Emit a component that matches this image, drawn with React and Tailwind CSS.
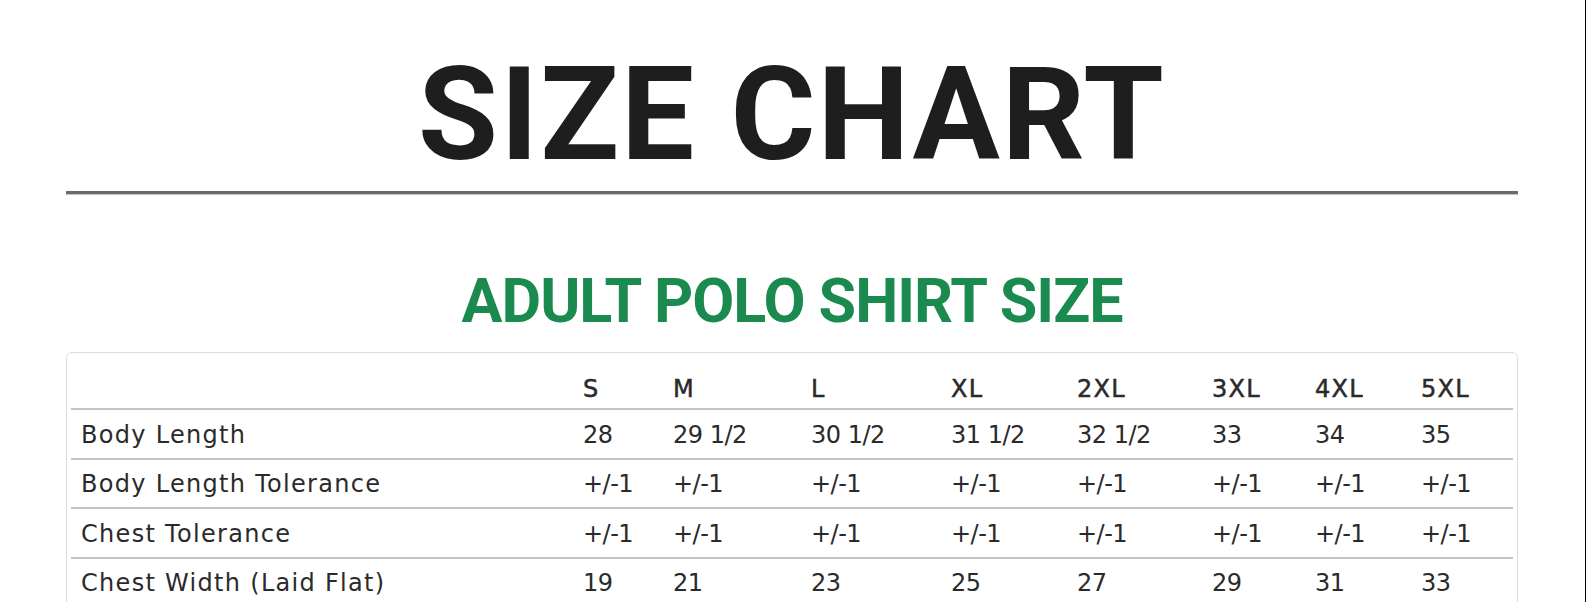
const sizes = ["S", "M", "L", "XL", "2XL", "3XL", "4XL", "5XL"];

const rows = [
  { label: "Body Length", values: ["28", "29 1/2", "30 1/2", "31 1/2", "32 1/2", "33", "34", "35"] },
  { label: "Body Length Tolerance", values: Array(8).fill("+/-1") },
  { label: "Chest Tolerance", values: Array(8).fill("+/-1") },
  { label: "Chest Width (Laid Flat)", values: ["19", "21", "23", "25", "27", "29", "31", "33"] },
];

const cols = "grid grid-cols-[512px_90px_138px_140px_126px_135px_103px_106px_1fr]";

const App = () => {
  return (
    <div className="h-[602px] w-full overflow-hidden border-r border-black bg-white">
      <div className="pl-[66px] pr-[67px] pt-[50px]">
        <h1 className="text-center font-['Roboto',sans-serif] text-[130px] font-bold leading-none tracking-[2px] text-[#1e1e1e]">
          SIZE CHART
        </h1>
        <div className="mt-[11px] h-[3px] bg-[#6a6a6a] shadow-[0_1px_1px_rgba(0,0,0,0.25)]" />

        <h2 className="mt-[77px] text-center font-['Roboto',sans-serif] text-[61px] font-bold leading-none tracking-[-1px] text-[#1b8a4f]">
          ADULT POLO SHIRT SIZE
        </h2>

        <div className="mt-[20px] rounded-md border border-[#dedede] px-[4px] font-['DejaVu_Sans',sans-serif] text-[24px] text-[#2a2a2a]">
          <div className={`${cols} h-[57px] items-start border-b-2 border-[#c4c4c4] pt-[21px] tracking-[1.3px] [-webkit-text-stroke:0.5px_#2a2a2a]`}>
            <div />
            {sizes.map((s) => (
              <div key={s} className="leading-[30px]">{s}</div>
            ))}
          </div>
          {rows.map((row) => (
            <div
              key={row.label}
              className={`${cols} h-[49.5px] items-center border-b-2 border-[#c4c4c4] pt-[2px]`}
            >
              <div className="pl-[10px] leading-[30px] tracking-[1.3px]">{row.label}</div>
              {row.values.map((v, i) => (
                <div key={i} className="leading-[30px] tracking-[-0.5px]">{v}</div>
              ))}
            </div>
          ))}
        </div>
      </div>
    </div>
  );
};

export default App;
